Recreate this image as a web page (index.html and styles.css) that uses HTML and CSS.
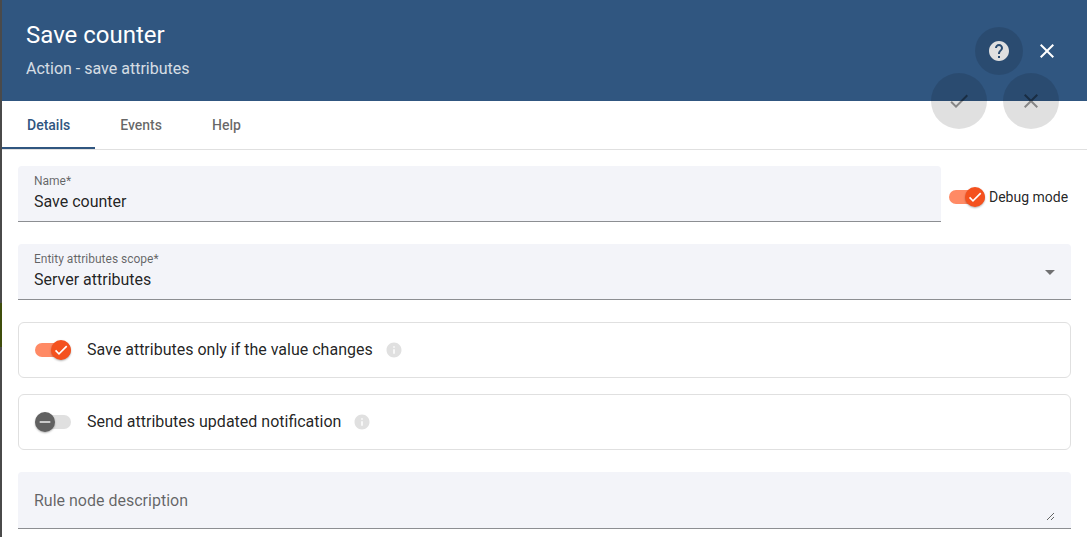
FILE: index.html
```html
<!DOCTYPE html>
<html lang="en">
<head>
<meta charset="utf-8">
<title>Save counter</title>
<link rel="stylesheet" href="styles.css">
</head>
<body>
<main class="drawer">
  <header class="header">
    <div class="titles">
      <h1 class="title">Save counter</h1>
      <p class="subtitle">Action - save attributes</p>
    </div>
    <button class="icon-btn icon-btn-hover" type="button" aria-label="Help">
      <svg class="icon" viewBox="0 0 24 24"><path d="M12 2C6.48 2 2 6.48 2 12s4.48 10 10 10 10-4.48 10-10S17.52 2 12 2zm1 17h-2v-2h2v2zm2.07-7.75l-.9.92C13.45 12.9 13 13.5 13 15h-2v-.5c0-1.1.45-2.1 1.17-2.83l1.24-1.26c.37-.36.59-.86.59-1.41 0-1.1-.9-2-2-2s-2 .9-2 2H8c0-2.21 1.79-4 4-4s4 1.79 4 4c0 .88-.36 1.68-.93 2.25z"/></svg>
    </button>
    <button class="icon-btn" type="button" aria-label="Close">
      <svg class="icon" viewBox="0 0 24 24"><path d="M19 6.41L17.59 5 12 10.59 6.41 5 5 6.41 10.59 12 5 17.59 6.41 19 12 13.41 17.59 19 19 17.59 13.41 12z"/></svg>
    </button>
    <div class="fabs">
      <button class="fab" type="button" aria-label="Apply changes" disabled>
        <svg class="icon" viewBox="0 0 24 24"><path d="M9 16.17L4.83 12l-1.42 1.41L9 19 21 7l-1.41-1.41z"/></svg>
      </button>
      <button class="fab" type="button" aria-label="Decline changes" disabled>
        <svg class="icon" viewBox="0 0 24 24"><path d="M19 6.41L17.59 5 12 10.59 6.41 5 5 6.41 10.59 12 5 17.59 6.41 19 12 13.41 17.59 19 19 17.59 13.41 12z"/></svg>
      </button>
    </div>
  </header>

  <nav class="tabs" role="tablist">
    <button class="tab tab-active" type="button" role="tab" aria-selected="true">Details</button>
    <button class="tab" type="button" role="tab" aria-selected="false">Events</button>
    <button class="tab" type="button" role="tab" aria-selected="false">Help</button>
  </nav>

  <form class="content">
    <div class="name-row">
      <div class="field">
        <label class="field-label" for="name">Name*</label>
        <input class="field-control" id="name" type="text" value="Save counter">
      </div>
      <label class="debug">
        <span class="switch">
          <input class="switch-input" type="checkbox" role="switch" checked>
          <span class="thumb"><svg class="thumb-icon" viewBox="0 0 24 24"><path d="M19.69 5.23L8.96 15.96l-4.23-4.23L2.96 13.5l6 6L21.46 7z"/></svg></span>
        </span>
        <span>Debug mode</span>
      </label>
    </div>

    <div class="field">
      <label class="field-label" for="scope">Entity attributes scope*</label>
      <div class="select-row">
        <select class="field-control" id="scope">
          <option>Server attributes</option>
        </select>
        <svg class="arrow" viewBox="0 0 10 5"><path d="M0 0h10L5 5z"/></svg>
      </div>
    </div>

    <div class="cards">
      <div class="card">
        <label class="option">
          <span class="switch">
            <input class="switch-input" type="checkbox" role="switch" checked>
            <span class="thumb"><svg class="thumb-icon" viewBox="0 0 24 24"><path d="M19.69 5.23L8.96 15.96l-4.23-4.23L2.96 13.5l6 6L21.46 7z"/></svg></span>
          </span>
          <span>Save attributes only if the value changes</span>
        </label>
        <svg class="info" viewBox="0 0 24 24"><path d="M12 2C6.48 2 2 6.48 2 12s4.48 10 10 10 10-4.48 10-10S17.52 2 12 2zm1 15h-2v-6h2v6zm0-8h-2V7h2v2z"/></svg>
      </div>
      <div class="card">
        <label class="option">
          <span class="switch">
            <input class="switch-input" type="checkbox" role="switch">
            <span class="thumb"><svg class="thumb-icon" viewBox="0 0 24 24"><path d="M20 13H4v-2h16z"/></svg></span>
          </span>
          <span>Send attributes updated notification</span>
        </label>
        <svg class="info" viewBox="0 0 24 24"><path d="M12 2C6.48 2 2 6.48 2 12s4.48 10 10 10 10-4.48 10-10S17.52 2 12 2zm1 15h-2v-6h2v6zm0-8h-2V7h2v2z"/></svg>
      </div>
    </div>

    <div class="field field-area">
      <textarea class="area" rows="1" aria-label="Rule node description" placeholder="Rule node description"></textarea>
    </div>
  </form>
</main>
</body>
</html>
```
FILE: styles.css
```css
* {
  box-sizing: border-box;
}

body {
  margin: 0;
  min-height: 100vh;
  padding-left: 2px;
  background: linear-gradient(#4a4a4a 303px, #3f4d0c 303px, #3f4d0c 347px, #4a4a4a 347px);
  color: rgba(0, 0, 0, 0.87);
  font-family: Roboto, "Liberation Sans", sans-serif;
  font-size: 16px;
  line-height: 24px;
}

button,
input,
select,
textarea {
  font: inherit;
  color: inherit;
}

button {
  border: 0;
  padding: 0;
  background: none;
}

.drawer {
  min-height: 100vh;
  background: #fff;
}

.header {
  position: relative;
  display: flex;
  align-items: center;
  min-height: 101px;
  padding: 0 16px 0 24px;
  background: #305680;
  color: #fff;
}

.titles {
  flex: 1;
}

.title {
  margin: 0 0 8px;
  font-size: 24px;
  font-weight: 400;
  line-height: 28px;
}

.subtitle {
  margin: 0;
  opacity: 0.8;
}

.icon {
  width: 24px;
  height: 24px;
  fill: currentColor;
}

.icon-btn {
  display: grid;
  place-items: center;
  width: 48px;
  height: 48px;
  border-radius: 50%;
}

.icon-btn-hover {
  background: rgba(0, 0, 0, 0.12);
  color: #e0e0e0;
}

.fabs {
  position: absolute;
  right: 28px;
  bottom: -28px;
  display: flex;
  gap: 16px;
}

.fab {
  display: grid;
  place-items: center;
  width: 56px;
  height: 56px;
  border-radius: 50%;
  background: rgba(0, 0, 0, 0.12);
  color: rgba(0, 0, 0, 0.4);
}

.tabs {
  display: flex;
  border-bottom: 1px solid #e0e0e0;
}

.tab {
  height: 48px;
  padding: 2px 25px 0;
  border-bottom: 2px solid transparent;
  color: rgba(0, 0, 0, 0.6);
  font-size: 14px;
  font-weight: 500;
}

.tab-active {
  border-color: #305680;
  color: #305680;
}

.content {
  display: flex;
  flex-direction: column;
  gap: 22px;
  padding: 16px 16px 8px;
}

.name-row {
  display: flex;
  align-items: center;
  gap: 8px;
}

.field {
  flex: 1;
  padding: 7px 16px;
  border-bottom: 1px solid #8c8e92;
  border-radius: 4px 4px 0 0;
  background: #f3f4f9;
}

.field-label {
  display: block;
  margin-bottom: 1px;
  color: rgba(0, 0, 0, 0.6);
  font-size: 12px;
  line-height: 16px;
}

.field-control {
  display: block;
  width: 100%;
  height: 24px;
  padding: 0;
  border: 0;
  outline: 0;
  background: none;
  appearance: none;
}

.select-row {
  display: flex;
  align-items: center;
}

.arrow {
  width: 10px;
  height: 5px;
  margin: 0 0 16px;
  fill: rgba(0, 0, 0, 0.54);
}

.debug {
  display: flex;
  align-items: center;
  gap: 4px;
  min-width: 122px;
  padding-top: 6px;
  font-size: 14px;
}

.switch {
  position: relative;
  display: block;
  width: 36px;
  height: 20px;
}

.switch-input {
  display: block;
  width: 36px;
  height: 14px;
  margin: 3px 0;
  border-radius: 7px;
  background: #e0e0e0;
  appearance: none;
}

.switch-input:checked {
  background: #ff8a65;
}

.thumb {
  position: absolute;
  top: 0;
  left: 0;
  display: grid;
  place-items: center;
  width: 20px;
  height: 20px;
  border-radius: 50%;
  background: #616161;
  box-shadow: 0 1px 2px rgba(0, 0, 0, 0.3);
  pointer-events: none;
}

.switch-input:checked + .thumb {
  left: 16px;
  background: #f4511e;
}

.thumb-icon {
  width: 16px;
  height: 16px;
  fill: #fff;
}

.cards {
  display: flex;
  flex-direction: column;
  gap: 16px;
}

.card {
  display: flex;
  align-items: center;
  gap: 12px;
  min-height: 56px;
  padding: 0 16px;
  border: 1px solid #e0e0e0;
  border-radius: 6px;
}

.option {
  display: flex;
  align-items: center;
  gap: 16px;
}

.info {
  width: 18px;
  height: 18px;
  fill: #e0e0e0;
}

.field-area {
  padding: 17px 16px 7px;
}

.area {
  display: block;
  width: 100%;
  height: 32px;
  min-height: 32px;
  padding: 0;
  border: 0;
  outline: 0;
  overflow: auto;
  background: none;
  resize: vertical;
}

.area::placeholder {
  color: rgba(0, 0, 0, 0.6);
}
```
